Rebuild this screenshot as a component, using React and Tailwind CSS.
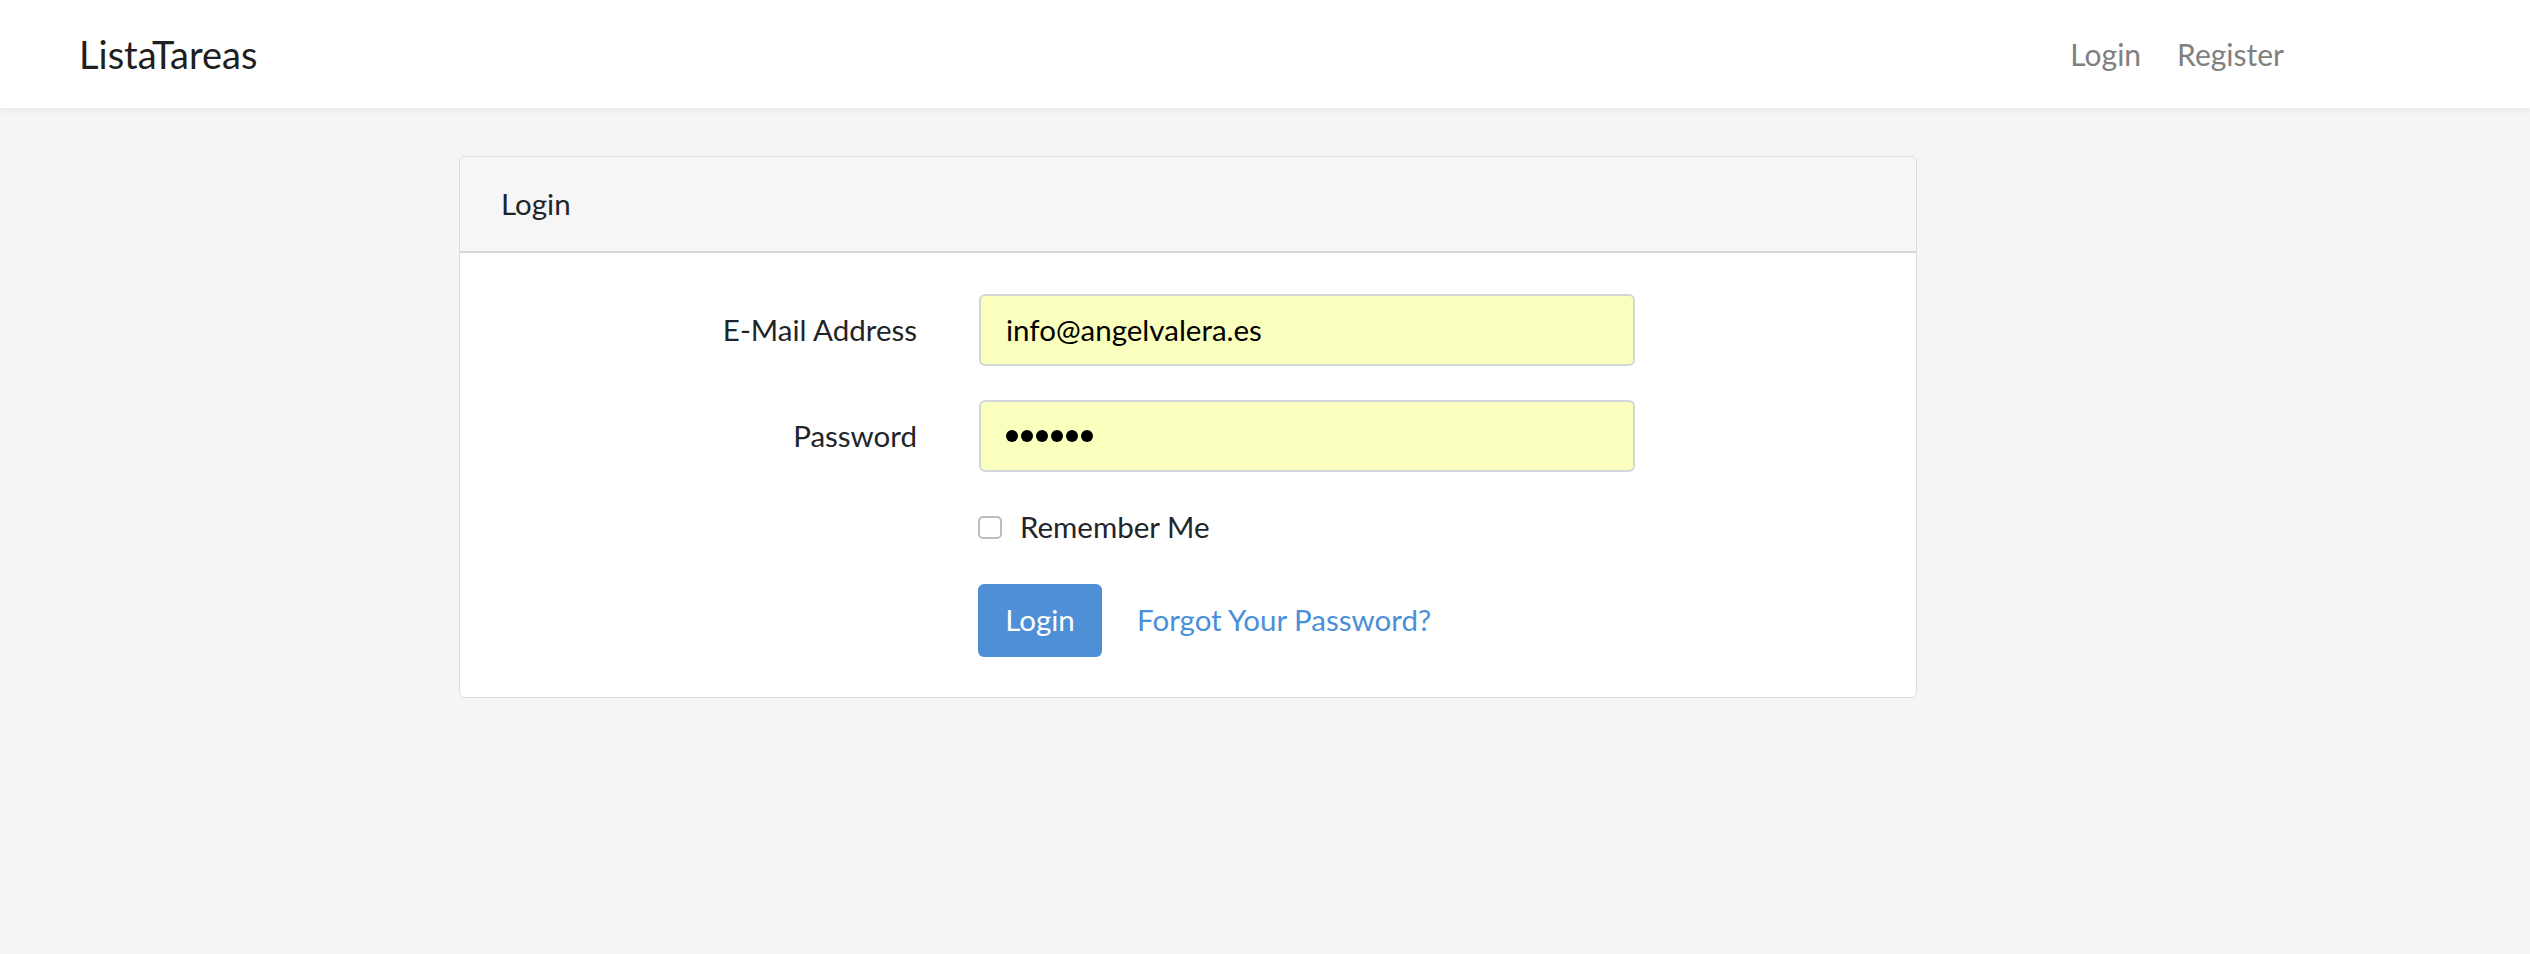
export default function App() {
  return (
    <div className="min-h-[954px] w-[2530px] bg-[#f5f5f5] font-['Lato',sans-serif] text-[#212529]">
      <nav className="flex h-[108px] items-center justify-between bg-white pl-[79px] pr-[246px] shadow-[0_3px_6px_rgba(0,0,0,0.05)]">
        <span className="text-[38px] leading-none text-[#1f1f1f]">ListaTareas</span>
        <div className="flex items-center gap-[36px] text-[30px] leading-none text-[#808080]">
          <span>Login</span>
          <span>Register</span>
        </div>
      </nav>
      <main className="pl-[459px] pt-[48px]">
        <div className="w-[1458px] overflow-hidden rounded-[6px] border border-[#dcdcdc] bg-white">
          <div className="flex h-[96px] items-center border-b-2 border-[#d6d6d6] bg-[#f6f6f6] px-[41px] text-[29.5px]">
            Login
          </div>
          <div className="pb-[40px] pt-[41px]">
            <div className="flex items-center">
              <label className="w-[457px] text-right text-[29.5px]">E-Mail Address</label>
              <div className="ml-[62px] flex h-[72px] w-[656px] items-center rounded-[6px] border-2 border-[#d3d6d9] bg-[#faffbd] px-[25px] text-[29.5px] text-black">
                info@angelvalera.es
              </div>
            </div>
            <div className="mt-[34px] flex items-center">
              <label className="w-[457px] text-right text-[29.5px]">Password</label>
              <div className="ml-[62px] flex h-[72px] w-[656px] items-center rounded-[6px] border-2 border-[#d3d6d9] bg-[#faffbd] px-[25px] text-black">
                <div className="flex gap-[3px]">
                  {[0, 1, 2, 3, 4, 5].map((i) => (
                    <span key={i} className="h-[12px] w-[12px] rounded-full bg-black" />
                  ))}
                </div>
              </div>
            </div>
            <div className="ml-[518px] mt-[37px] flex h-[36px] items-center">
              <span className="h-[23px] w-[24px] rounded-[5px] border-2 border-[#bdbdbd] bg-white" />
              <span className="ml-[18px] text-[29.5px]">Remember Me</span>
            </div>
            <div className="ml-[518px] mt-[39px] flex items-center">
              <button className="flex h-[73px] w-[124px] items-center justify-center rounded-[6px] bg-[#4e8fd8] text-[29.5px] text-white">
                Login
              </button>
              <span className="ml-[35px] text-[29.5px] text-[#4a8fd9]">Forgot Your Password?</span>
            </div>
          </div>
        </div>
      </main>
    </div>
  );
}
